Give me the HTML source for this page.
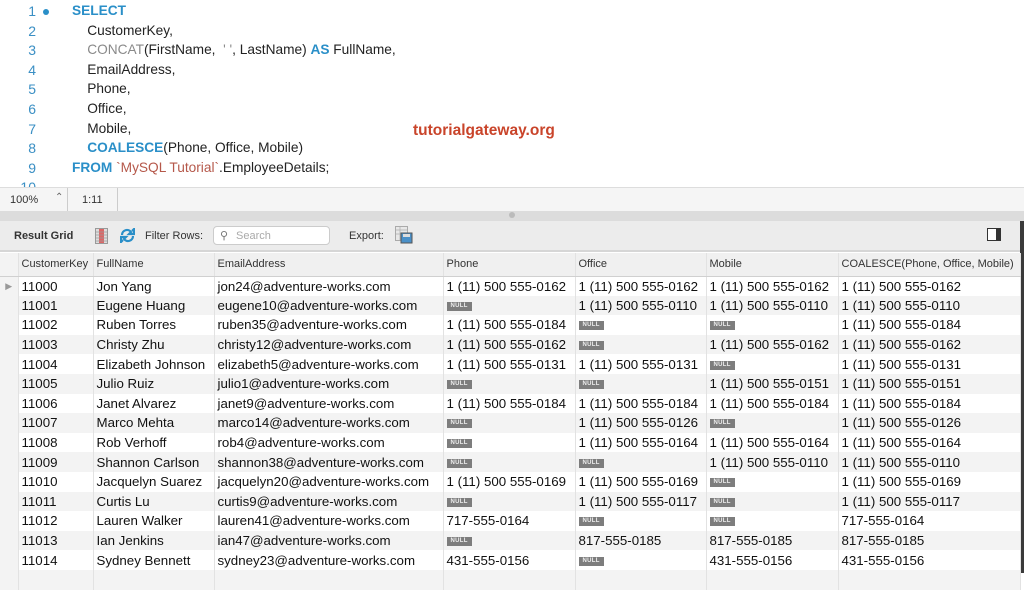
<!DOCTYPE html>
<html><head><meta charset="utf-8"><style>
*{margin:0;padding:0;box-sizing:border-box}
body{width:1024px;height:573px;overflow:hidden;background:#fff;font-family:"Liberation Sans",Arial,sans-serif;position:relative}
.code{position:absolute;left:0;top:0;width:1024px;height:187px;background:#fff;overflow:hidden}
.ln{position:absolute;left:0;width:36px;text-align:right;color:#3a8fc4;font-size:14px}
.cl{position:absolute;left:72px;font-size:13.7px;color:#222;white-space:pre}
.k{color:#2a8fc8;font-weight:bold}
.g{color:#8a8a8a}
.r{color:#b5584a}
.status{position:absolute;left:0;top:187px;width:1024px;height:24px;background:#f5f5f5;border-top:1px solid #ddd;font-size:11px;color:#333}
.split{position:absolute;left:0;top:211px;width:1024px;height:10px;background:#dcdcdc}
.tb{position:absolute;left:0;top:221px;width:1020px;height:31px;background:#ececec;border-bottom:2px solid #d6d6d6;font-size:11px;color:#333}
table{position:absolute;left:0;top:253px;border-collapse:collapse;font-size:13.3px;color:#111;table-layout:fixed}
td,th{height:19.6px;padding:0 0 0 3px;white-space:nowrap;overflow:hidden;border-right:1px solid #e2e2e2;text-align:left}
th{height:23px;background:#f0f0f0;font-weight:normal;font-size:11px;color:#333;border-bottom:1px solid #d0d0d0}
tr:nth-child(odd) td{background:#f3f3f3}
tr.w td{background:#fff}
td.gut,th.gut{background:#f3f3f3!important;padding:0;color:#999;font-size:9px;text-align:center}
.n{display:inline-block;background:#7d7d7d;color:#eee;font-size:6px;font-weight:bold;padding:1px 4px;line-height:7px;vertical-align:middle;letter-spacing:.3px}
.sb{position:absolute;right:0;top:221px;width:4px;height:352px;background:#3a3a3a}
</style></head><body>
<div class="code">
<div class="ln" style="top:3px">1</div><div style="position:absolute;left:43px;top:9px;width:6px;height:6px;border-radius:50%;background:#2a8fc8"></div>
<div class="ln" style="top:22.6px">2</div><div class="ln" style="top:42.2px">3</div><div class="ln" style="top:61.8px">4</div><div class="ln" style="top:81.4px">5</div><div class="ln" style="top:101px">6</div><div class="ln" style="top:120.6px">7</div><div class="ln" style="top:140.2px">8</div><div class="ln" style="top:159.8px">9</div><div class="ln" style="top:179.4px">10</div>
<div class="cl" style="top:3px"><span class="k">SELECT</span></div>
<div class="cl" style="top:22.6px">    CustomerKey,</div>
<div class="cl" style="top:42.2px">    <span class="g">CONCAT</span>(FirstName,  <span class="g">' '</span>, LastName) <span class="k">AS</span> FullName,</div>
<div class="cl" style="top:61.8px">    EmailAddress,</div>
<div class="cl" style="top:81.4px">    Phone,</div>
<div class="cl" style="top:101px">    Office,</div>
<div class="cl" style="top:120.6px">    Mobile,</div>
<div class="cl" style="top:140.2px">    <span class="k">COALESCE</span>(Phone, Office, Mobile)</div>
<div class="cl" style="top:159.8px"><span class="k">FROM</span> <span class="r">`MySQL Tutorial`</span>.EmployeeDetails;</div>
<div style="position:absolute;left:413px;top:122px;font-size:15.5px;font-weight:bold;color:#c9442a">tutorialgateway.org</div>
</div>
<div class="status"><span style="position:absolute;left:10px;top:6px">100%</span><span style="position:absolute;left:55px;top:4px;font-size:10px;color:#666">⌃</span><div style="position:absolute;left:67px;top:0;width:1px;height:23px;background:#ccc"></div><span style="position:absolute;left:82px;top:6px">1:11</span><div style="position:absolute;left:117px;top:0;width:1px;height:23px;background:#ccc"></div></div>
<div class="split"><div style="position:absolute;left:509px;top:1px;width:6px;height:6px;border-radius:50%;background:#bbb"></div></div>
<div class="tb">
<span style="position:absolute;left:14px;top:9px;font-weight:bold;font-size:11px">Result Grid</span>
<svg style="position:absolute;left:95px;top:7px" width="13" height="16"><rect x="0.5" y="0.5" width="12" height="15" fill="#ddd" stroke="#999"/><rect x="4" y="1" width="5" height="14" fill="#d66"/><path d="M1 4H12M1 7H12M1 10H12M1 13H12" stroke="#999" stroke-width=".7"/></svg>
<svg style="position:absolute;left:120px;top:7px" width="15" height="15"><path d="M2 7A5 5 0 0 1 11 4L9 6H14V1L12 3" fill="none" stroke="#2a8fc8" stroke-width="2.2"/><path d="M13 8A5 5 0 0 1 4 11L6 9H1V14L3 12" fill="none" stroke="#2a8fc8" stroke-width="2.2"/></svg>
<span style="position:absolute;left:145px;top:9px">Filter Rows:</span>
<div style="position:absolute;left:213px;top:5px;width:117px;height:19px;background:#fff;border:1px solid #ccc;border-radius:4px"><span style="position:absolute;left:6px;top:2px;font-size:11px;color:#777">⚲</span><span style="position:absolute;left:22px;top:3px;color:#aaa">Search</span></div>
<span style="position:absolute;left:349px;top:9px">Export:</span>
<svg style="position:absolute;left:395px;top:5px" width="18" height="18"><rect x="0.5" y="0.5" width="12" height="14" fill="#e8e8e8" stroke="#aaa"/><path d="M1 4H12M1 8H12M5 1V14" stroke="#bbb"/><rect x="6" y="7" width="11" height="10" fill="#4a90c8" stroke="#555"/><rect x="8" y="8" width="7" height="3" fill="#ddd"/></svg>
<svg style="position:absolute;left:987px;top:7px" width="15" height="14"><rect x="0.5" y="0.5" width="13" height="12" fill="#fff" stroke="#333"/><rect x="9" y="1" width="4" height="11" fill="#333"/></svg>
</div>
<div class="sb"></div>
<table>
<colgroup><col style="width:18px"><col style="width:75px"><col style="width:121px"><col style="width:229px"><col style="width:132px"><col style="width:131px"><col style="width:132px"><col style="width:182px"></colgroup>
<tr class="w"><th class="gut"></th><th>CustomerKey</th><th>FullName</th><th>EmailAddress</th><th>Phone</th><th>Office</th><th>Mobile</th><th>COALESCE(Phone, Office, Mobile)</th></tr>
<tr class="w"><td class="gut">▶</td><td>11000</td><td>Jon Yang</td><td>jon24@adventure-works.com</td><td>1 (11) 500 555-0162</td><td>1 (11) 500 555-0162</td><td>1 (11) 500 555-0162</td><td>1 (11) 500 555-0162</td></tr>
<tr><td class="gut"></td><td>11001</td><td>Eugene Huang</td><td>eugene10@adventure-works.com</td><td><span class="n">NULL</span></td><td>1 (11) 500 555-0110</td><td>1 (11) 500 555-0110</td><td>1 (11) 500 555-0110</td></tr>
<tr class="w"><td class="gut"></td><td>11002</td><td>Ruben Torres</td><td>ruben35@adventure-works.com</td><td>1 (11) 500 555-0184</td><td><span class="n">NULL</span></td><td><span class="n">NULL</span></td><td>1 (11) 500 555-0184</td></tr>
<tr><td class="gut"></td><td>11003</td><td>Christy Zhu</td><td>christy12@adventure-works.com</td><td>1 (11) 500 555-0162</td><td><span class="n">NULL</span></td><td>1 (11) 500 555-0162</td><td>1 (11) 500 555-0162</td></tr>
<tr class="w"><td class="gut"></td><td>11004</td><td>Elizabeth Johnson</td><td>elizabeth5@adventure-works.com</td><td>1 (11) 500 555-0131</td><td>1 (11) 500 555-0131</td><td><span class="n">NULL</span></td><td>1 (11) 500 555-0131</td></tr>
<tr><td class="gut"></td><td>11005</td><td>Julio Ruiz</td><td>julio1@adventure-works.com</td><td><span class="n">NULL</span></td><td><span class="n">NULL</span></td><td>1 (11) 500 555-0151</td><td>1 (11) 500 555-0151</td></tr>
<tr class="w"><td class="gut"></td><td>11006</td><td>Janet Alvarez</td><td>janet9@adventure-works.com</td><td>1 (11) 500 555-0184</td><td>1 (11) 500 555-0184</td><td>1 (11) 500 555-0184</td><td>1 (11) 500 555-0184</td></tr>
<tr><td class="gut"></td><td>11007</td><td>Marco Mehta</td><td>marco14@adventure-works.com</td><td><span class="n">NULL</span></td><td>1 (11) 500 555-0126</td><td><span class="n">NULL</span></td><td>1 (11) 500 555-0126</td></tr>
<tr class="w"><td class="gut"></td><td>11008</td><td>Rob Verhoff</td><td>rob4@adventure-works.com</td><td><span class="n">NULL</span></td><td>1 (11) 500 555-0164</td><td>1 (11) 500 555-0164</td><td>1 (11) 500 555-0164</td></tr>
<tr><td class="gut"></td><td>11009</td><td>Shannon Carlson</td><td>shannon38@adventure-works.com</td><td><span class="n">NULL</span></td><td><span class="n">NULL</span></td><td>1 (11) 500 555-0110</td><td>1 (11) 500 555-0110</td></tr>
<tr class="w"><td class="gut"></td><td>11010</td><td>Jacquelyn Suarez</td><td>jacquelyn20@adventure-works.com</td><td>1 (11) 500 555-0169</td><td>1 (11) 500 555-0169</td><td><span class="n">NULL</span></td><td>1 (11) 500 555-0169</td></tr>
<tr><td class="gut"></td><td>11011</td><td>Curtis Lu</td><td>curtis9@adventure-works.com</td><td><span class="n">NULL</span></td><td>1 (11) 500 555-0117</td><td><span class="n">NULL</span></td><td>1 (11) 500 555-0117</td></tr>
<tr class="w"><td class="gut"></td><td>11012</td><td>Lauren Walker</td><td>lauren41@adventure-works.com</td><td>717-555-0164</td><td><span class="n">NULL</span></td><td><span class="n">NULL</span></td><td>717-555-0164</td></tr>
<tr><td class="gut"></td><td>11013</td><td>Ian Jenkins</td><td>ian47@adventure-works.com</td><td><span class="n">NULL</span></td><td>817-555-0185</td><td>817-555-0185</td><td>817-555-0185</td></tr>
<tr class="w"><td class="gut"></td><td>11014</td><td>Sydney Bennett</td><td>sydney23@adventure-works.com</td><td>431-555-0156</td><td><span class="n">NULL</span></td><td>431-555-0156</td><td>431-555-0156</td></tr>
<tr><td class="gut"></td><td></td><td></td><td></td><td></td><td></td><td></td><td></td></tr>
</table>
</body></html>
